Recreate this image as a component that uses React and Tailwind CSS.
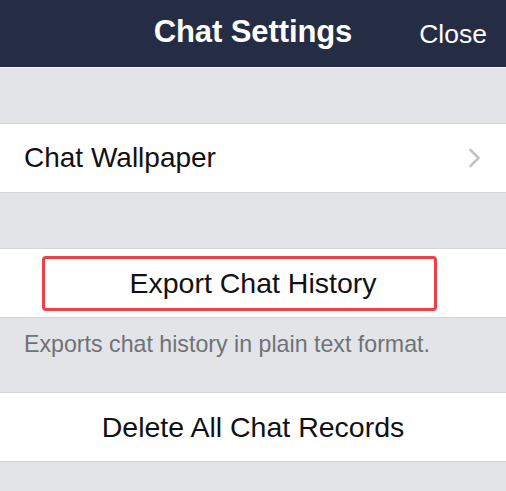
export default function App() {
  return (
    <div
      className="w-[506px] h-[491px] overflow-hidden bg-[#e2e4e7]"
      style={{ fontFamily: '"Liberation Sans", Arial, sans-serif' }}
    >
      <header className="relative h-[68px] bg-[#252d44] border-b border-[#f2f3f5] flex items-center justify-center">
        <h1 className="text-white text-[31px] font-bold tracking-[-0.1px] -mt-[2px]">Chat Settings</h1>
        <button className="absolute right-[19px] top-[15px] text-white text-[26.5px]">Close</button>
      </header>

      <div className="h-[55px]" />

      <div className="h-[70px] bg-white border-y border-[#d3d5d8] flex items-center justify-between pl-[24px] pr-[24px]">
        <span className="text-[28px] text-[#111]">Chat Wallpaper</span>
        <svg width="14" height="20" viewBox="0 0 14 20">
          <path d="M2.5 2l8 8-8 8" fill="none" stroke="#c4c4c8" strokeWidth="2.6" strokeLinecap="round" strokeLinejoin="round" />
        </svg>
      </div>

      <div className="h-[55px]" />

      <div className="relative h-[70px] bg-white border-y border-[#d3d5d8] flex items-center justify-center">
        <span className="text-[28.5px] text-[#111]">Export Chat History</span>
        <div className="absolute left-[42px] top-[7px] w-[395px] h-[55px] border-[3px] border-[#ec4146] rounded-[4px]" />
      </div>

      <div className="h-[74px] pl-[24px] pt-[9px]">
        <p className="text-[23.2px] text-[#717277]">Exports chat history in plain text format.</p>
      </div>

      <div className="h-[70px] bg-white border-y border-[#d3d5d8] flex items-center justify-center">
        <span className="text-[28.5px] text-[#111]">Delete All Chat Records</span>
      </div>
    </div>
  )
}
